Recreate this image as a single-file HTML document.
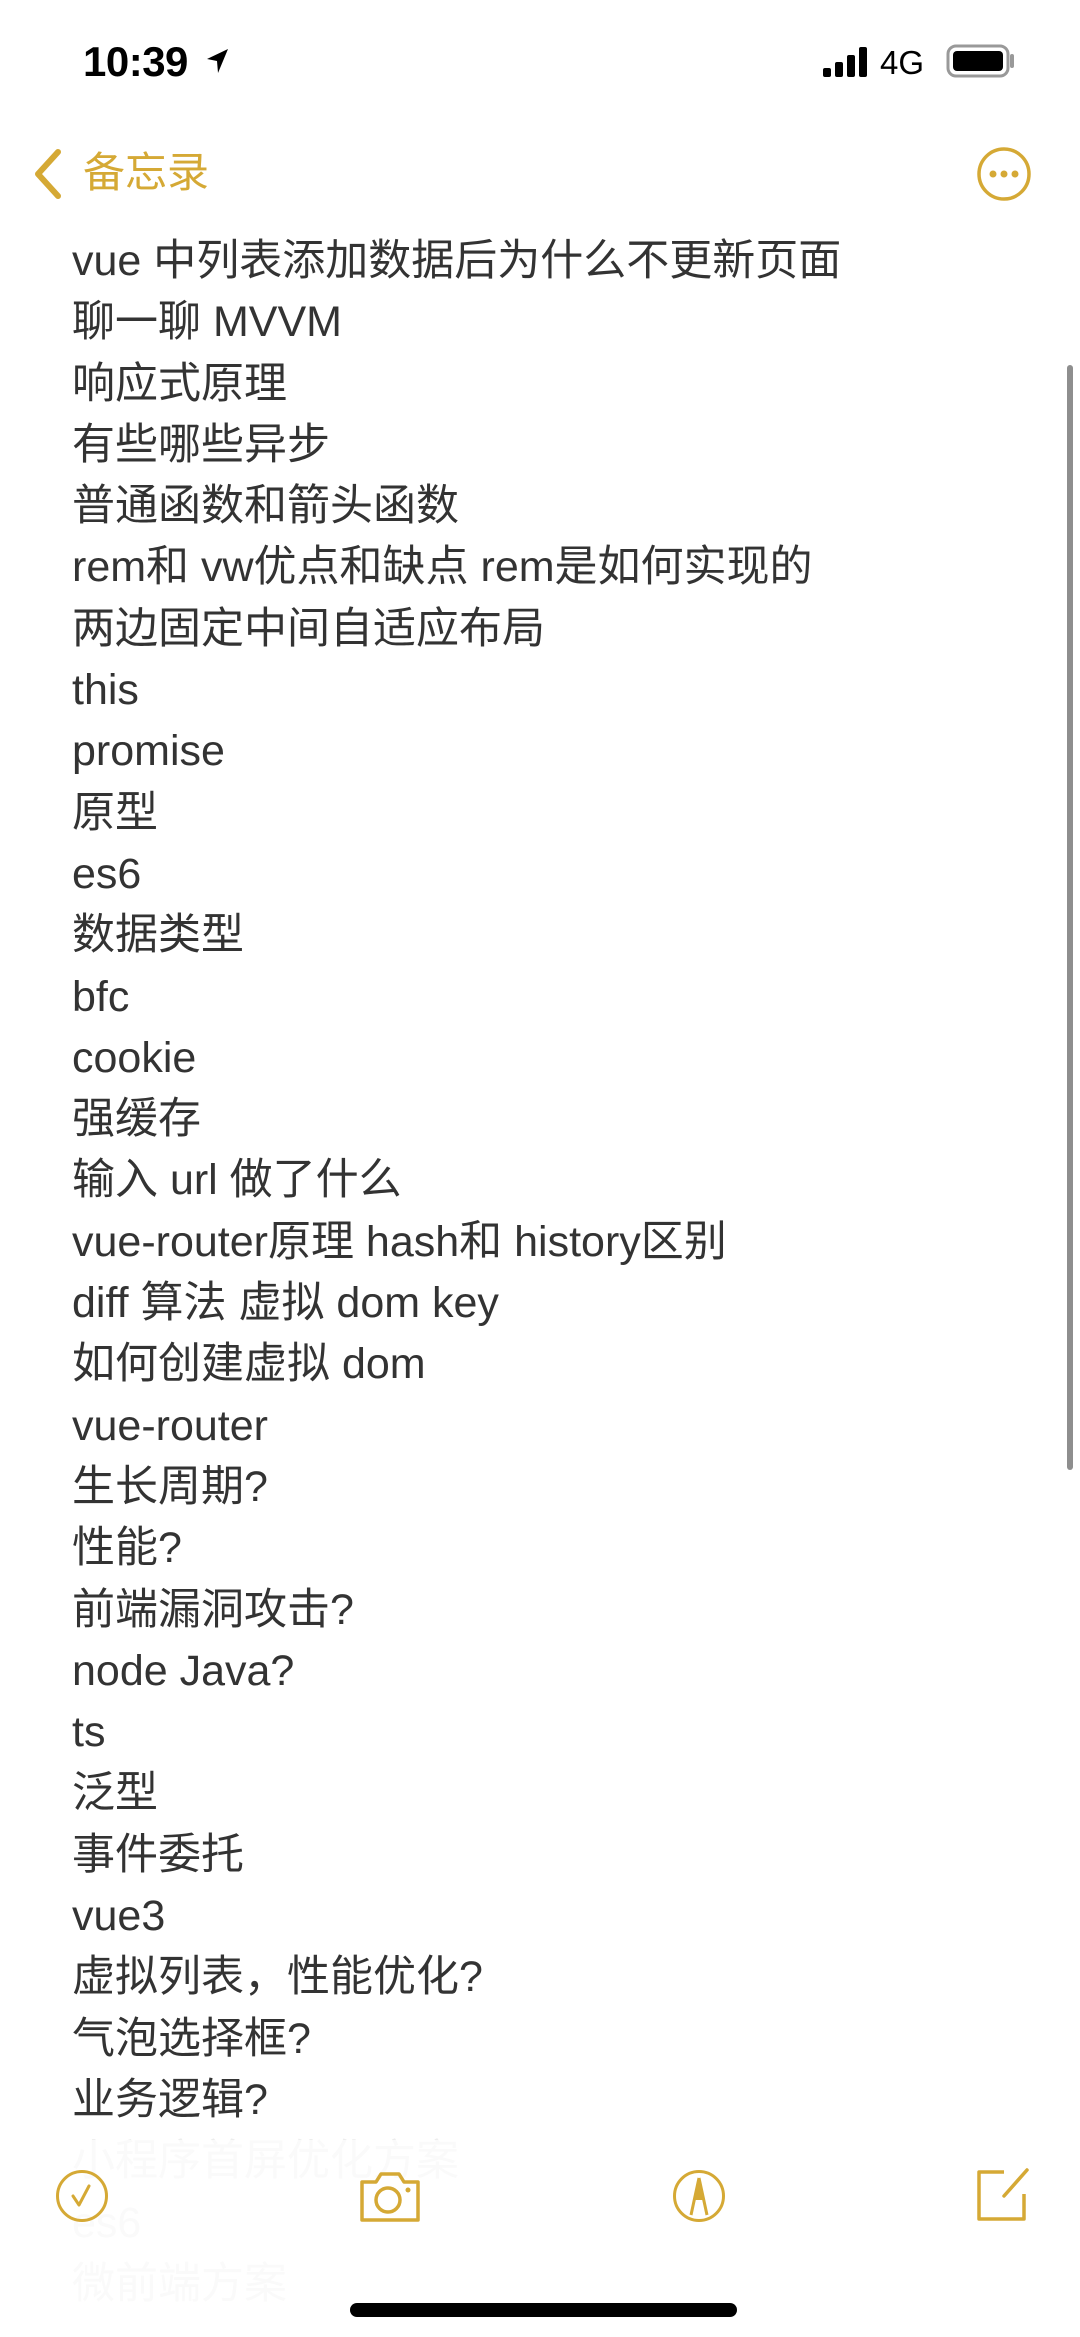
<!DOCTYPE html>
<html><head><meta charset="utf-8">
<style>
html{width:1080px;height:2337px;overflow:hidden;}
html,body{margin:0;padding:0;background:#fff;}
body{width:1080px;height:2337px;position:relative;overflow:hidden;font-family:"Liberation Sans","Noto Sans CJK SC",sans-serif;}
.time{position:absolute;left:83px;top:38px;font-size:42px;font-weight:bold;color:#000;letter-spacing:-0.5px;}
.back{position:absolute;left:83px;top:145px;font-size:42px;color:#d5a935;line-height:56px;}
.lines{position:absolute;left:72px;top:231px;font-size:43px;color:#333;white-space:nowrap;}
.lines div{height:61.3px;line-height:61.3px;}
.faint{color:#ededed;}
.sb{position:absolute;left:1067px;top:365px;width:6px;height:1105px;border-radius:3px;background:#8e8e8e;}
.home{position:absolute;left:350px;top:2303px;width:387px;height:14px;border-radius:7px;background:#000;}
.toolbar{position:absolute;left:0;top:2140px;width:1080px;height:197px;background:rgba(255,255,255,0.7);}
</style></head><body>
<div class="time">10:39</div>
<svg style="position:absolute;left:204px;top:46px" width="26" height="30" viewBox="0 0 26 30"><path d="M24 3 L3 13 L13 15 L14 27 Z" fill="#000"/></svg>
<svg style="position:absolute;left:820px;top:44px" width="60" height="34" viewBox="0 0 60 34">
<rect x="3" y="24" width="8" height="9" rx="2" fill="#000"/><rect x="15" y="18" width="8" height="15" rx="2" fill="#000"/><rect x="27" y="11" width="8" height="22" rx="2" fill="#000"/><rect x="39" y="3" width="8" height="30" rx="2" fill="#000"/></svg>
<div style="position:absolute;left:880px;top:44px;font-size:33px;color:#000;">4G</div>
<svg style="position:absolute;left:946px;top:44px" width="72" height="34" viewBox="0 0 72 34">
<rect x="2" y="2" width="60" height="30" rx="8" fill="none" stroke="#999" stroke-width="3"/><rect x="7" y="7" width="50" height="20" rx="4" fill="#000"/><path d="M66 12 v10" stroke="#999" stroke-width="4" stroke-linecap="round"/></svg>

<svg style="position:absolute;left:30px;top:148px" width="36" height="52" viewBox="0 0 36 52"><path d="M28 4 L8 26 L28 48" fill="none" stroke="#d5a935" stroke-width="6" stroke-linecap="round" stroke-linejoin="round"/></svg>
<div class="back">备忘录</div>
<svg style="position:absolute;left:976px;top:146px" width="56" height="56" viewBox="0 0 56 56"><circle cx="28" cy="28" r="25" fill="none" stroke="#d5a935" stroke-width="3.5"/><circle cx="17" cy="28" r="3.5" fill="#d5a935"/><circle cx="28" cy="28" r="3.5" fill="#d5a935"/><circle cx="39" cy="28" r="3.5" fill="#d5a935"/></svg>

<div class="lines">
<div>vue 中列表添加数据后为什么不更新页面</div>
<div>聊一聊 MVVM</div>
<div>响应式原理</div>
<div>有些哪些异步</div>
<div>普通函数和箭头函数</div>
<div>rem和 vw优点和缺点 rem是如何实现的</div>
<div>两边固定中间自适应布局</div>
<div>this</div>
<div>promise</div>
<div>原型</div>
<div>es6</div>
<div>数据类型</div>
<div>bfc</div>
<div>cookie</div>
<div>强缓存</div>
<div>输入 url 做了什么</div>
<div>vue-router原理 hash和 history区别</div>
<div>diff 算法 虚拟 dom key</div>
<div>如何创建虚拟 dom</div>
<div>vue-router</div>
<div>生长周期?</div>
<div>性能?</div>
<div>前端漏洞攻击?</div>
<div>node Java?</div>
<div>ts</div>
<div>泛型</div>
<div>事件委托</div>
<div>vue3</div>
<div>虚拟列表，性能优化?</div>
<div>气泡选择框?</div>
<div>业务逻辑?</div>
<div class="faint">小程序首屏优化方案</div>
<div class="faint">es6</div>
<div class="faint">微前端方案</div>
</div>
<div class="sb"></div>
<div class="toolbar"></div>

<svg style="position:absolute;left:55px;top:2169px" width="54" height="54" viewBox="0 0 54 54"><circle cx="27" cy="27" r="24.5" fill="none" stroke="#d5a935" stroke-width="3"/><path d="M18 27 L24 36 L34 17" fill="none" stroke="#d5a935" stroke-width="3" stroke-linecap="round" stroke-linejoin="round"/></svg>
<svg style="position:absolute;left:356px;top:2168px" width="68" height="56" viewBox="0 0 68 56"><path d="M6 14 h14 l5 -8 h18 l5 8 h14 v38 h-56 z" fill="none" stroke="#d5a935" stroke-width="3.5" stroke-linejoin="round"/><circle cx="32" cy="32" r="12" fill="none" stroke="#d5a935" stroke-width="3.5"/><circle cx="52" cy="22" r="2.5" fill="#d5a935"/></svg>
<svg style="position:absolute;left:672px;top:2169px" width="54" height="54" viewBox="0 0 54 54"><circle cx="27" cy="27" r="24.5" fill="none" stroke="#d5a935" stroke-width="3"/><path d="M27 9 L19 46 M27 9 L35 46" fill="none" stroke="#d5a935" stroke-width="3"/><path d="M27 9 L22 31 L32 31 Z" fill="#d5a935"/></svg>
<svg style="position:absolute;left:974px;top:2166px" width="58" height="58" viewBox="0 0 58 58"><path d="M30 6 H5 V53 H50 V28" fill="none" stroke="#d5a935" stroke-width="3.5" stroke-linejoin="round"/><path d="M53 4 L30 30" stroke="#d5a935" stroke-width="3.5" stroke-linecap="round"/></svg>
<div class="home"></div>
</body></html>
